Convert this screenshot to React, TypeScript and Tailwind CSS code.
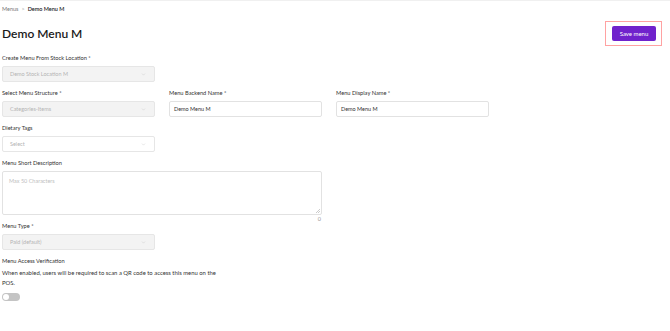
import { ChevronDown } from "lucide-react";

function Label({ children }: { children: React.ReactNode }) {
  return <p className="text-[5.7px] text-[#333] mb-[4px] leading-[8px]">{children}</p>;
}

function SelectBox({ value, disabled }: { value: string; disabled?: boolean }) {
  return (
    <div
      className={`flex items-center justify-between h-[16px] w-[153px] rounded-[2px] border border-[#e6e6e6] pl-[7px] pr-[8px] ${
        disabled ? "bg-[#f3f3f3]" : "bg-white"
      }`}
    >
      <span className="text-[5.5px] text-[#b3b3b3]">{value}</span>
      <ChevronDown className="w-[5px] h-[5px] text-[#c4c4c4]" />
    </div>
  );
}

function TextBox({ value }: { value: string }) {
  return (
    <div className="flex items-center h-[16px] w-[153px] rounded-[2px] border border-[#e2e2e2] bg-white px-[4px]">
      <span className="text-[5.5px] text-[#333]">{value}</span>
    </div>
  );
}

export default function App() {
  return (
    <div className="w-[670px] h-[331px] bg-white border-t border-[#f0f0f0] font-['Lato',sans-serif] text-[5.5px] leading-[8px]">
      <div className="px-[2px]">
        {/* Breadcrumb */}
        <div className="flex items-center gap-[3px] pt-[4px] leading-[8px]">
          <span className="text-[#777]">Menus</span>
          <span className="text-[#aaa]">&gt;</span>
          <span className="text-[#222] font-semibold">Demo Menu M</span>
        </div>

        {/* Header */}
        <div className="flex items-center justify-between mt-[8px]">
          <h1 className="text-[12px] font-semibold text-[#1a1a1a] leading-[16px]">Demo Menu M</h1>
          <div className="mr-[6px] border border-red-300 pl-[6px] pr-[5px] pt-[4px] pb-[4px]">
            <button className="block bg-[#7022cc] text-white text-[6px] leading-none rounded-[2px] w-[44px] h-[15px]">
              Save menu
            </button>
          </div>
        </div>

        {/* Form */}
        <div className="mt-[8px]">
          <Label>Create Menu From Stock Location *</Label>
          <SelectBox value="Demo Stock Location M" disabled />

          <div className="flex gap-[14px] mt-[7px]">
            <div>
              <Label>Select Menu Structure *</Label>
              <SelectBox value="Categories-Items" disabled />
            </div>
            <div>
              <Label>Menu Backend Name *</Label>
              <TextBox value="Demo Menu M" />
            </div>
            <div>
              <Label>Menu Display Name *</Label>
              <TextBox value="Demo Menu M" />
            </div>
          </div>

          <div className="mt-[7px]">
            <Label>Dietary Tags</Label>
            <SelectBox value="Select" />
          </div>

          <div className="mt-[7px] w-[320px]">
            <Label>Menu Short Description</Label>
            <div className="h-[44px] rounded-[2px] border border-[#e2e2e2] bg-white px-[6px] py-[5px] relative">
              <span className="text-[#c0c0c0]">Max 50 Characters</span>
              <svg className="absolute right-[1px] bottom-[1px] w-[4px] h-[4px]" viewBox="0 0 4 4">
                <path d="M4 0L0 4M4 2L2 4" stroke="#999" strokeWidth="0.5" />
              </svg>
            </div>
            <p className="text-right text-[#999] pr-[1px] leading-[8px]">0</p>
          </div>

          <div className="-mt-[1px]">
            <Label>Menu Type *</Label>
            <SelectBox value="Paid (default)" disabled />
          </div>

          <div className="mt-[7px] w-[214px]">
            <Label>Menu Access Verification</Label>
            <p className="text-[5.9px] text-[#333] leading-[10px] -mt-[1px]">
              When enabled, users will be required to scan a QR code to access this menu on the POS.
            </p>
            <div className="mt-[5px] w-[18px] h-[8px] rounded-full bg-[#c4c4c4] relative">
              <div className="absolute left-[1px] top-[1px] w-[6px] h-[6px] rounded-full bg-white" />
            </div>
          </div>
        </div>
      </div>
    </div>
  );
}
